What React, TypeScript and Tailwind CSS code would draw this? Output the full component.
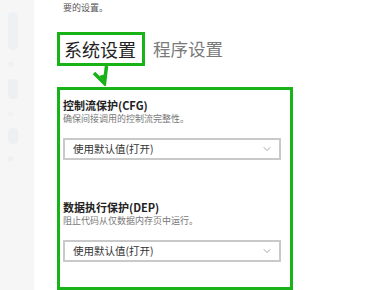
import { ChevronDown } from 'lucide-react';

const font = { fontFamily: '"Noto Sans CJK SC", "Noto Sans", sans-serif' };

function Select({ label }: { label: string }) {
  return (
    <div className="flex h-[22px] w-[218px] items-center justify-between border-2 border-[#c9c9c9] bg-white pl-[8px] pr-[6px]">
      <span className="text-[10.5px] leading-none text-[#333]">{label}</span>
      <ChevronDown className="h-[12px] w-[12px] text-[#888]" strokeWidth={1.5} />
    </div>
  );
}

function Section({ title, desc, value }: { title: string; desc: string; value: string }) {
  return (
    <div>
      <div className="text-[11px] font-bold leading-[14px] text-[#222]">{title}</div>
      <div className="mt-[1px] text-[9px] leading-[12px] text-[#777]">{desc}</div>
      <div className="mt-[13px]">
        <Select label={value} />
      </div>
    </div>
  );
}

export default function App() {
  return (
    <div className="flex h-[290px] w-[390px] overflow-hidden bg-white" style={font}>
      {/* faded sidebar */}
      <div className="flex w-[34px] shrink-0 flex-col items-start gap-[12px] bg-[#f6f6f7] pl-[8px] pt-[12px]">
        <div className="h-[38px] w-[10px] rounded-sm bg-[#eef1f4]" />
        <div className="h-[5px] w-[6px] rounded-sm bg-[#eff1f4]" />
        <div className="h-[20px] w-[10px] rounded-sm bg-[#edf0f3]" />
        <div className="h-[5px] w-[5px] rounded-sm bg-[#f0f2f4]" />
        <div className="h-[16px] w-[10px] rounded-sm bg-[#edf0f3]" />
        <div className="h-[6px] w-[5px] rounded-sm bg-[#eef1f4]" />
      </div>

      <div className="flex flex-col pl-[23px]">
        <div className="ml-[6px] mt-[2px] text-[9px] leading-[12px] text-[#555]">要的设置。</div>

        <div className="mt-[18px] flex items-center">
          <div className="flex h-[34px] items-center border-[3px] border-[#17b317] pl-[4px] pr-[6px]">
            <span className="text-[18px] leading-none text-[#222]">系统设置</span>
          </div>
          <span className="ml-[8px] text-[17.5px] leading-none text-[#7a7a7a]">程序设置</span>
        </div>

        {/* arrow pointing from the tab down to the panel */}
        <svg width="20" height="20" viewBox="0 0 20 20" className="ml-[35px] shrink-0">
          <path d="M2 7 L12.5 17.5 L14.5 0" fill="none" stroke="#17b317" strokeWidth="3.5" strokeLinejoin="miter" />
          <path d="M7 10 L12.5 15.5 L13.5 8 Z" fill="#17b317" />
        </svg>

        <div className="mt-[1px] flex h-[240px] w-[236px] flex-col gap-[40px] border-[3px] border-[#17b317] pl-[3px] pt-[8px]">
          <Section title="控制流保护(CFG)" desc="确保间接调用的控制流完整性。" value="使用默认值(打开)" />
          <Section title="数据执行保护(DEP)" desc="阻止代码从仅数据内存页中运行。" value="使用默认值(打开)" />
        </div>
      </div>
    </div>
  );
}
